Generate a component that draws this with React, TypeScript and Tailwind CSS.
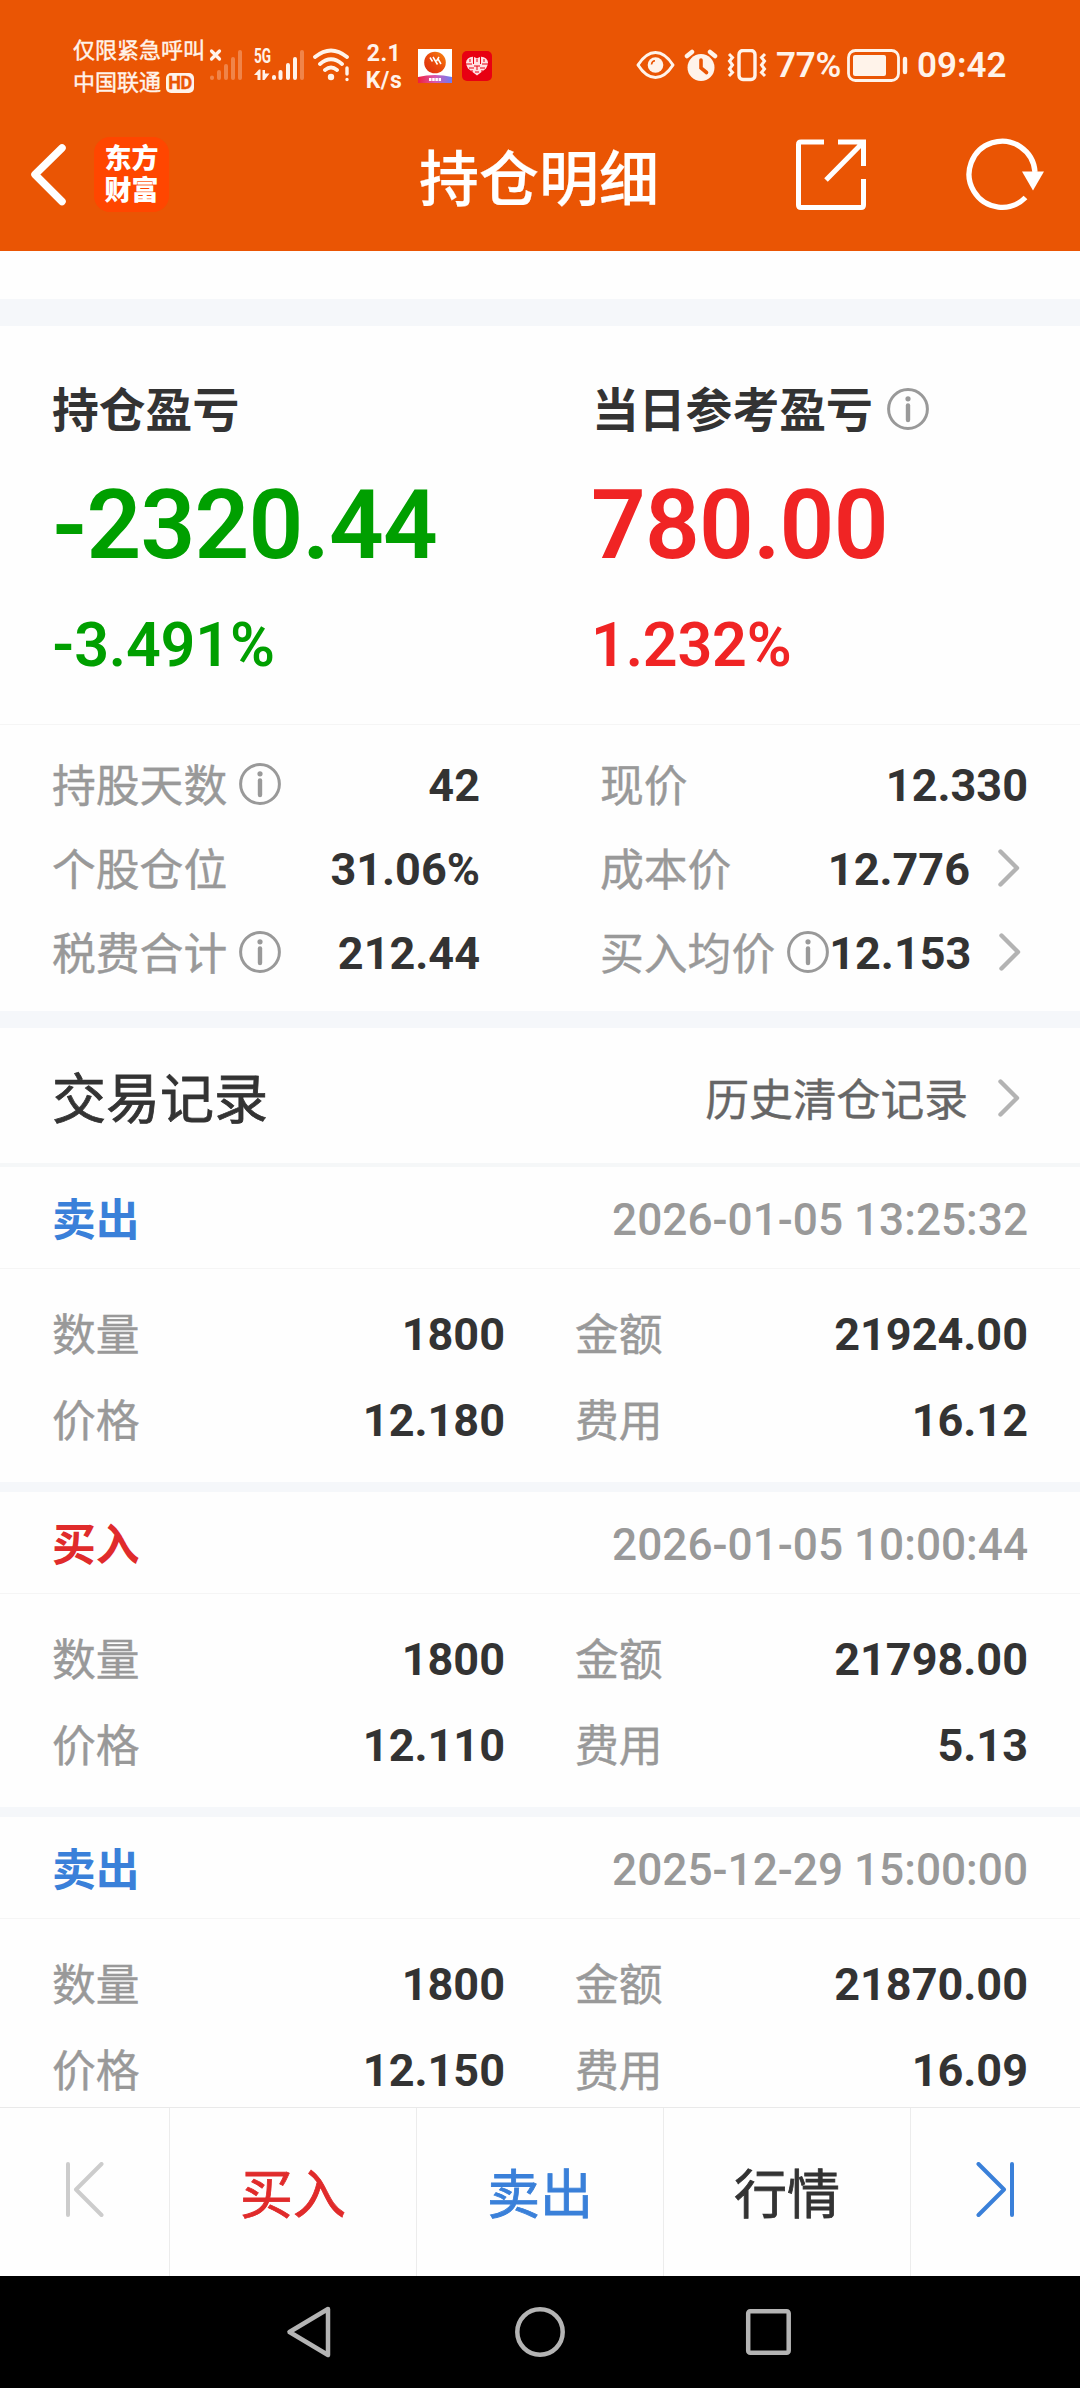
import React from "react";

const ink = "text-[#333333]";

function Info({ className = "" }: { className?: string }) {
  return (
    <svg className={`shrink-0 ${className}`} width="42" height="42" viewBox="0 0 42 42" fill="none" stroke="#999999">
      <circle cx="21" cy="21" r="19.4" strokeWidth="3" />
      <path d="M21 17.5V32" strokeWidth="4.4" strokeLinecap="round" />
      <circle cx="21" cy="10.8" r="2.6" fill="#999999" stroke="none" />
    </svg>
  );
}

function Chevron({ className = "" }: { className?: string }) {
  return (
    <svg className={`ml-[28px] mr-[8px] shrink-0 ${className}`} width="22" height="38" viewBox="0 0 22 38" fill="none" stroke="#b3b3b3" strokeWidth="4.4" strokeLinecap="round" strokeLinejoin="round">
      <path d="M2.5 2.5L19 19L2.5 35.5" />
    </svg>
  );
}

function StatusBar() {
  return (
    <div className="flex h-[130px] items-start text-[#fff3ea]">
      <div className="ml-[73px] mt-[35px] w-[132px] whitespace-nowrap text-[22px] leading-[32px] [-webkit-text-stroke:0.4px]">
        <div>仅限紧急呼叫</div>
        <div className="flex items-center">
          中国联通
          <span className="ml-[5px] flex h-[20px] w-[28px] items-center justify-center rounded-[5px] bg-[#fff3ea] text-[18px] font-bold tracking-[-0.500px] text-[#ea5504]">HD</span>
        </div>
      </div>
      <svg className="ml-[4px] mt-[48px]" width="35" height="33" viewBox="0 0 35 33" fill="none" stroke="currentColor" strokeLinecap="round">
        <path d="M2.5 3L10.500 11M10.500 3L2.500 11" strokeWidth="3.200" />
        <g strokeWidth="4" opacity="0.3">
          <path d="M3 29.500V30M10 24V30M17 18V30M24 11V30M31 4V30" />
        </g>
      </svg>
      <div className="ml-[10px] mt-[46px] flex w-[52px] items-start">
        <div className="flex w-[18px] flex-col">
          <span className="origin-left scale-x-[0.68] text-[20px] font-bold leading-[20px]">5G</span>
          <svg className="mt-[3px]" width="18" height="13" viewBox="0 0 18 13" fill="currentColor">
            <path d="M0 6L5 0.500H6.500V11H3.500V6ZM8.500 1H11V4.500H15.500L10.500 11H8.500Z" />
          </svg>
        </div>
        <svg className="mt-[2px]" width="34" height="33" viewBox="0 0 34 33" fill="none" stroke="currentColor" strokeLinecap="round" strokeWidth="4">
          <path d="M2 29V30M8.500 24V30M16 17V30M23 11V30" />
          <path d="M30 4V30" opacity="0.3" />
        </svg>
      </div>
      <svg className="ml-[7px] mt-[48px]" width="38" height="34" viewBox="0 0 38 34" fill="none" stroke="currentColor" strokeLinecap="round" strokeWidth="3.800">
        <path d="M2 9Q18 -4 34 9M7 16Q18 6.500 29 16M12 22Q18 17 24 22" />
        <circle cx="18" cy="29" r="3.200" fill="currentColor" stroke="none" />
        <path d="M34 20V26M34 31.500V31.600" strokeWidth="3.400" />
      </svg>
      <div className="ml-[13px] mt-[40px] w-[40px] text-center text-[23px] font-bold leading-[27px]">
        <div className="tracking-[0.500px]">2.1</div>
        <div className="tracking-[0.500px]">K/s</div>
      </div>
      <svg className="ml-[14px] mt-[49px]" width="34" height="34" viewBox="0 0 34 34">
        <defs>
          <linearGradient id="disc" x1="1" y1="0" x2="0" y2="1">
            <stop offset="0" stopColor="#f98a10" />
            <stop offset="0.500" stopColor="#ea4a0c" />
            <stop offset="1" stopColor="#d92b10" />
          </linearGradient>
          <linearGradient id="wave" x1="0" x2="1">
            <stop offset="0" stopColor="#f0203c" />
            <stop offset="0.500" stopColor="#d858b0" />
            <stop offset="1" stopColor="#6b7cf5" />
          </linearGradient>
        </defs>
        <rect width="34" height="34" fill="#fff" />
        <circle cx="17" cy="13.500" r="10.800" fill="url(#disc)" />
        <path d="M12 8.500L14.500 12.500M15 8L19.500 15.500M21 8L18.500 12M20 10L23 15" stroke="#fff" strokeWidth="1.500" />
        <path d="M0 28Q17 24 34 28V34H0Z" fill="url(#wave)" />
        <path d="M11 30.500H23" stroke="#fff" strokeWidth="3" strokeDasharray="2.500 0.700" />
      </svg>
      <svg className="ml-[10px] mt-[51px]" width="30" height="30" viewBox="0 0 30 30">
        <rect width="30" height="30" rx="5" fill="#e80012" />
        <path d="M15 24.500L6 17.500Q2 11 6 7.500Q10.500 4 15 7.500Q19.500 4 24 7.500Q28 11 24 17.500Z" fill="#ffe1e3" />
        <path d="M11.500 6V13M18.500 6V13M8 8V11M22 8V11M15 8V11M4 13H10M26 13H20M12 15H18M7 17H12M23 17H18M15 15V19M10 19V21M20 19V21M13 21H17" stroke="#e80012" strokeWidth="1" />
      </svg>
      <svg className="ml-[144px] mt-[50px]" width="40" height="31" viewBox="0 0 40 31" fill="none" stroke="currentColor">
        <path d="M2 15Q10 2.500 19.500 2.500Q29 2.500 37 15Q29 27.500 19.500 27.500Q10 27.500 2 15Z" strokeWidth="3" strokeLinejoin="round" />
        <circle cx="19.500" cy="15" r="7.800" fill="currentColor" stroke="none" />
        <path d="M15.500 14.500Q16 11 19 10.800" stroke="#ea5504" strokeWidth="1.600" />
      </svg>
      <svg className="ml-[8px] mt-[49px]" width="34" height="33" viewBox="0 0 34 33" fill="currentColor">
        <circle cx="17" cy="18.500" r="13.500" />
        <path d="M3 7L8 3M26 3L31 7" stroke="currentColor" strokeWidth="4.500" strokeLinecap="round" />
        <path d="M17 11V19L22.500 23.500" fill="none" stroke="#ea5504" strokeWidth="3.600" strokeLinecap="round" />
      </svg>
      <svg className="ml-[9px] mt-[49px]" width="40" height="33" viewBox="0 0 40 33" fill="none" stroke="currentColor" strokeWidth="3">
        <rect x="12" y="1.500" width="16" height="29" rx="4" strokeWidth="3.400" />
        <path d="M2 5L5.500 8.500L2.500 12L5.500 16L2.500 20L5.500 23.500L2 27M38 5L34.500 8.500L37.500 12L34.500 16L37.500 20L34.500 23.500L38 27" />
      </svg>
      <div className="ml-[9px] mt-[46px] w-[66px] text-[35px] font-semibold leading-[40px] tracking-[-0.300px]">77%</div>
      <svg className="ml-[5px] mt-[49px]" width="62" height="33" viewBox="0 0 62 33" fill="none" stroke="currentColor">
        <rect x="1.500" y="1.500" width="50" height="30" rx="7" strokeWidth="2.800" />
        <rect x="6" y="6" width="33" height="21" rx="2" fill="currentColor" stroke="none" />
        <path d="M58 10V23" strokeWidth="4.400" strokeLinecap="round" />
      </svg>
      <div className="ml-[8px] mt-[46px] text-[35px] font-semibold leading-[40px]">09:42</div>
    </div>
  );
}

function TitleBar() {
  return (
    <div className="flex h-[121px] text-white">
      <svg className="ml-[29px] mt-[13px]" width="40" height="64" viewBox="0 0 40 64" fill="none" stroke="currentColor" strokeWidth="7.500" strokeLinecap="round" strokeLinejoin="round">
        <path d="M33 5L6 31.500L33 58.500" />
      </svg>
      <div className="ml-[25px] mt-[7px] flex h-[75px] w-[75px] flex-col items-center justify-center rounded-[16px] bg-[#ff4600] text-[27px] font-black leading-[32px]">
        <div>东方</div>
        <div>财富</div>
      </div>
      <h1 className="ml-[250px] mt-[11px] w-[242px] text-[60px] font-medium leading-[80px] [-webkit-text-stroke:0.2px]">持仓明细</h1>
      <svg className="ml-[134px] mt-[8px]" width="73" height="74" viewBox="0 0 73 74" fill="none" stroke="currentColor" strokeWidth="5">
        <path d="M29 4H6Q3.500 4 3.500 6.500V67Q3.500 69.500 6 69.500H66Q68.500 69.500 68.500 67V41M43 4H68.500V28M68 4.500L31 42" />
      </svg>
      <svg className="ml-[93px] mt-[6px]" width="84" height="78" viewBox="0 0 84 78" fill="none" stroke="currentColor" strokeWidth="5.300">
        <path d="M74 36A33 33 0 1 0 64.500 61.500" />
        <path d="M61 35.500H83L72 54.500Z" fill="currentColor" stroke="none" />
      </svg>
    </div>
  );
}

function Stat({ label, value, info, arrow }: { label: string; value: string; info?: boolean; arrow?: boolean }) {
  return (
    <div className="flex h-[84px] items-center">
      <span className="mt-[2px] whitespace-nowrap text-[43.800px] text-[#999999] [-webkit-text-stroke:0.4px]">{label}</span>
      {info && <Info className="-mt-[5px] ml-[12px]" />}
      <span className={`ml-auto text-[45px] font-bold ${ink}`}>{value}</span>
      {arrow && <Chevron className="-mt-[5px]" />}
    </div>
  );
}

function Field({ label, value }: { label: string; value: string }) {
  return (
    <div className="flex h-[86px] items-center">
      <span className="mt-[2px] text-[43.800px] text-[#999999] [-webkit-text-stroke:0.4px]">{label}</span>
      <span className={`ml-auto text-[45px] font-bold ${ink}`}>{value}</span>
    </div>
  );
}

type Trade = { side: "buy" | "sell"; time: string; qty: string; amount: string; price: string; fee: string };

const trades: Trade[] = [
  { side: "sell", time: "2026-01-05 13:25:32", qty: "1800", amount: "21924.00", price: "12.180", fee: "16.12" },
  { side: "buy", time: "2026-01-05 10:00:44", qty: "1800", amount: "21798.00", price: "12.110", fee: "5.13" },
  { side: "sell", time: "2025-12-29 15:00:00", qty: "1800", amount: "21870.00", price: "12.150", fee: "16.09" },
];

function TradeCard({ trade }: { trade: Trade }) {
  return (
    <article className="border-b-[10px] border-[#f5f7fa]">
      <div className="flex h-[102px] items-center justify-between border-b border-[#f5f5f5] px-[52px] pt-[5px]">
        <span className={trade.side === "buy" ? "pt-[2px] text-[43.800px] font-bold text-[#e02b2b]" : "pt-[2px] text-[43.800px] font-bold text-[#3a80d9]"}>
          {trade.side === "buy" ? "买入" : "卖出"}
        </span>
        <time className="text-[44.200px] font-medium text-[#999999]">{trade.time}</time>
      </div>
      <div className="grid grid-cols-[453px_453px] gap-x-[70px] pb-[18px] pl-[52px] pt-[23px]">
        <Field label="数量" value={trade.qty} />
        <Field label="金额" value={trade.amount} />
        <Field label="价格" value={trade.price} />
        <Field label="费用" value={trade.fee} />
      </div>
    </article>
  );
}

export default function App() {
  return (
    <div className="flex h-[2388px] w-[1080px] flex-col overflow-hidden bg-[#fefefe] font-['Roboto','Noto_Sans_CJK_SC',sans-serif]">
      <header className="h-[251px] shrink-0 bg-[#ea5504]">
        <StatusBar />
        <TitleBar />
      </header>

      <main className="h-[1856px] shrink-0 overflow-hidden leading-[60px]">
        <div className="mt-[48px] h-[27px] bg-[#f5f7fa]" />
        <section className="grid h-[398px] grid-cols-[540px_1fr] pt-[55px]">
          <div className="pl-[52px] text-[#009f00]">
            <h2 className={`h-[60px] text-[46.800px] font-bold ${ink}`}>持仓盈亏</h2>
            <div className="mt-[34px] text-[96px] font-semibold leading-[100px] tracking-[-0.800px]">-2320.44</div>
            <div className="mt-[35px] text-[61px] font-semibold leading-[70px] tracking-[-0.200px]">-3.491%</div>
          </div>
          <div className="pl-[52px] text-[#f02424]">
            <h2 className={`flex h-[60px] items-center text-[46.800px] font-bold ${ink}`}>
              当日参考盈亏
              <Info className="-mt-[5px] ml-[14px]" />
            </h2>
            <div className="-ml-[1px] mt-[34px] text-[96px] font-semibold leading-[100px] tracking-[-0.800px]">780.00</div>
            <div className="-ml-[1px] mt-[35px] text-[61px] font-semibold leading-[70px] tracking-[-0.200px]">1.232%</div>
          </div>
        </section>

        <section className="grid h-[287px] grid-cols-[428px_428px] content-start gap-x-[120px] border-t border-[#f5f5f5] pl-[52px] pt-[19px]">
          <Stat label="持股天数" value="42" info />
          <Stat label="现价" value="12.330" />
          <Stat label="个股仓位" value="31.06%" />
          <Stat label="成本价" value="12.776" arrow />
          <Stat label="税费合计" value="212.44" info />
          <Stat label="买入均价" value="12.153" info arrow />
        </section>
        <div className="h-[17px] bg-[#f5f7fa]" />

        <section>
          <div className="flex h-[139px] items-center border-b-4 border-[#f5f7f8] pl-[52px] pr-[52px]">
            <h2 className={`mt-[10px] text-[54px] [-webkit-text-stroke:0.8px] ${ink}`}>交易记录</h2>
            <span className="ml-auto mr-[2px] mt-[10px] text-[43.800px] text-[#666666] [-webkit-text-stroke:0.4px]">历史清仓记录</span>
            <Chevron className="mt-[4px]" />
          </div>
          {trades.map((t) => (
            <TradeCard key={t.time} trade={t} />
          ))}
        </section>
      </main>

      <footer className="grid h-[169px] shrink-0 grid-cols-[170px_247px_247px_247px_169px] border-t border-[#e9e9e9] bg-[#fefefe] text-center text-[53px] leading-[177px]">
        <div className="border-r border-[#ececec] pl-[64px] pt-[54px]">
          <svg width="40" height="56" viewBox="0 0 40 56" fill="none" stroke="#cccccc" strokeWidth="4" strokeLinecap="round" strokeLinejoin="round">
            <path d="M4 2V53M37.500 2L12 27.500L37.500 53" />
          </svg>
        </div>
        <div className="border-r border-[#ececec] text-[#e02b2b] [-webkit-text-stroke:0.8px]">买入</div>
        <div className="border-r border-[#ececec] text-[#3a80d9] [-webkit-text-stroke:0.8px]">卖出</div>
        <div className={`border-r border-[#ececec] [-webkit-text-stroke:0.8px] ${ink}`}>行情</div>
        <div className="pl-[64px] pt-[54px]">
          <svg width="40" height="56" viewBox="0 0 40 56" fill="none" stroke="#3a80d9" strokeWidth="4" strokeLinecap="round" strokeLinejoin="round">
            <path d="M37 2V53M3.500 2L29 27.500L3.500 53" />
          </svg>
        </div>
      </footer>

      <nav className="flex h-[112px] shrink-0 items-center bg-black">
        <svg className="ml-[285px]" width="48" height="54" viewBox="0 0 48 54" fill="none" stroke="#b4b4b4" strokeWidth="4.500" strokeLinejoin="round">
          <path d="M43 4L4.500 27L43 50Z" />
        </svg>
        <svg className="ml-[180px]" width="54" height="54" viewBox="0 0 54 54" fill="none" stroke="#b4b4b4" strokeWidth="4.500">
          <circle cx="27" cy="27" r="22.700" />
        </svg>
        <svg className="ml-[177px]" width="48" height="54" viewBox="0 0 48 54" fill="none" stroke="#b4b4b4" strokeWidth="4.500">
          <rect x="4.200" y="6.200" width="40.500" height="41.500" rx="2" />
        </svg>
      </nav>
    </div>
  );
}
